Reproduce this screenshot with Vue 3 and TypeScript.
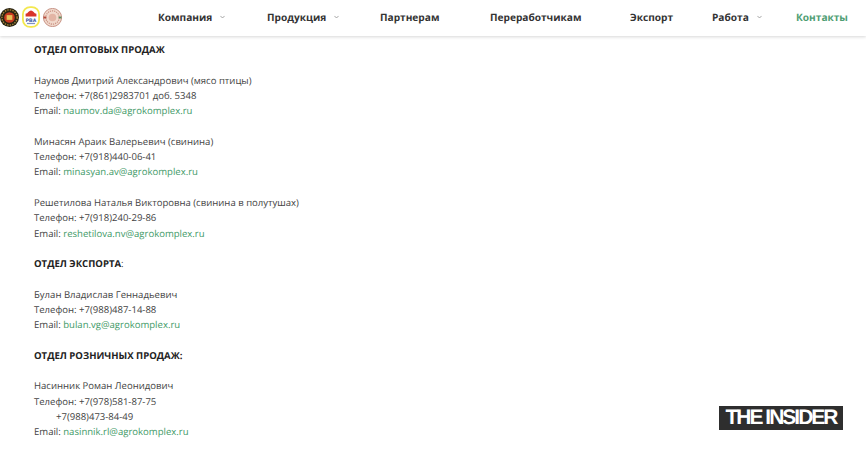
<template>
  <div class="page">
    <header class="topbar">
      <div class="logos">
        <svg class="logo logo-one" viewBox="0 0 20 20">
          <circle cx="10" cy="10" r="10" fill="#2b2412" />
          <circle cx="10" cy="10" r="8" fill="none" stroke="#a98a3a" stroke-width="1.4" stroke-dasharray="1.5 1.2" />
          <circle cx="10" cy="10" r="5.6" fill="#c8391f" />
          <rect x="7" y="7.5" width="6" height="5" fill="#e8c25a" />
        </svg>
        <svg class="logo logo-two" viewBox="0 0 20 24">
          <rect x="1" y="1" width="18" height="22" rx="8" fill="#fff" stroke="#f3e84f" stroke-width="2" />
          <path d="M4 11.5 L4 8.5 Q6 8.5 7 6.5 Q10 3 13 6.5 Q14 8.5 16 8.5 L16 11.5 Z" fill="#d8352a" />
          <text x="10" y="17.5" class="logo-text">PBA</text>
          <rect x="5.5" y="18.5" width="9" height="1.4" fill="#7d92c4" />
        </svg>
        <svg class="logo logo-three" viewBox="0 0 20 20">
          <circle cx="10" cy="10" r="9.6" fill="#f1d9cc" stroke="#b9796a" stroke-width="0.8" />
          <circle cx="10" cy="10" r="7" fill="none" stroke="#c98f80" stroke-width="1.2" stroke-dasharray="1.3 1" />
          <circle cx="10" cy="10" r="4" fill="#e3b5a5" />
          <rect x="0.5" y="9" width="3" height="2" fill="#b54a3a" />
          <rect x="16.5" y="9" width="3" height="2" fill="#5d8a5d" />
        </svg>
      </div>
      <nav class="menu">
        <a v-for="item in menu" :key="item.label" class="menu-item" :class="{ active: item.active }" :style="{ width: item.width + 'px' }">
          {{ item.label }}
          <svg v-if="item.drop" class="chevron" viewBox="0 0 6 4"><path d="M0.5 0.7 L3 3.2 L5.5 0.7" fill="none" stroke="#8a8a8a" stroke-width="0.9" /></svg>
        </a>
      </nav>
    </header>

    <main class="content">
      <template v-for="(section, i) in sections" :key="i">
        <p class="title"><b>{{ section.title }}</b>{{ section.tail }}</p>
        <p v-for="person in section.people" :key="person.email" class="person">
          {{ person.name }}<br />
          Телефон: {{ person.phone }}<br />
          <template v-if="person.phone2"><span class="indent">{{ person.phone2 }}</span><br /></template>
          Email: <a class="mail">{{ person.email }}</a>
        </p>
      </template>
    </main>

    <div class="badge">THE INSIDER</div>
  </div>
</template>

<script setup lang="ts">
interface Person {
  name: string
  phone: string
  phone2?: string
  email: string
}

const menu = [
  { label: 'Компания', drop: true, width: 109 },
  { label: 'Продукция', drop: true, width: 113 },
  { label: 'Партнерам', width: 110 },
  { label: 'Переработчикам', width: 140 },
  { label: 'Экспорт', width: 82 },
  { label: 'Работа', drop: true, width: 84 },
  { label: 'Контакты', active: true, width: 52 }
]

const sections: { title: string; tail?: string; people: Person[] }[] = [
  {
    title: 'ОТДЕЛ ОПТОВЫХ ПРОДАЖ',
    people: [
      { name: 'Наумов Дмитрий Александрович (мясо птицы)', phone: '+7(861)2983701 доб. 5348', email: 'naumov.da@agrokomplex.ru' },
      { name: 'Минасян Араик Валерьевич (свинина)', phone: '+7(918)440-06-41', email: 'minasyan.av@agrokomplex.ru' },
      { name: 'Решетилова Наталья Викторовна (свинина в полутушах)', phone: '+7(918)240-29-86', email: 'reshetilova.nv@agrokomplex.ru' }
    ]
  },
  {
    title: 'ОТДЕЛ ЭКСПОРТА',
    tail: ':',
    people: [
      { name: 'Булан Владислав Геннадьевич', phone: '+7(988)487-14-88', email: 'bulan.vg@agrokomplex.ru' }
    ]
  },
  {
    title: 'ОТДЕЛ РОЗНИЧНЫХ ПРОДАЖ:',
    people: [
      { name: 'Насинник Роман Леонидович', phone: '+7(978)581-87-75', phone2: '+7(988)473-84-49', email: 'nasinnik.rl@agrokomplex.ru' }
    ]
  }
]
</script>

<style scoped>
.page {
  height: 451px;
  overflow: hidden;
  background: #fff;
  font-family: "Open Sans", sans-serif;
  color: #444;
  text-rendering: geometricPrecision;
}
.topbar {
  height: 36px;
  padding-bottom: 2px;
  box-sizing: border-box;
  display: flex;
  align-items: center;
  background: #fff;
  box-shadow: 0 1px 3px rgba(0, 0, 0, 0.16);
}
.logos {
  display: flex;
  align-items: center;
  width: 158px;
  flex: none;
}
.logo-one {
  width: 19px;
  height: 19px;
}
.logo-two {
  width: 18px;
  height: 22px;
  margin-left: 3px;
}
.logo-three {
  width: 19px;
  height: 19px;
  margin-left: 3px;
}
.logo-text {
  font-family: "Liberation Sans", sans-serif;
  font-size: 5.5px;
  font-weight: 700;
  fill: #2a4a9a;
  text-anchor: middle;
}
.menu {
  display: flex;
  align-items: center;
}
.menu-item {
  flex: none;
  display: flex;
  align-items: center;
  font-size: 10.15px;
  font-weight: 700;
  white-space: nowrap;
  color: #333;
}
.menu-item.active {
  color: #4f9e74;
}
.chevron {
  width: 5px;
  height: 4px;
  margin-left: 8px;
}
.content {
  padding: 6.2px 0 0 34px;
  font-size: 9.55px;
  line-height: 15.28px;
}
.content p {
  margin: 0 0 15.28px;
}
.title b {
  font-weight: 700;
  color: #222;
}
.indent {
  padding-left: 22px;
}
.mail {
  color: #3f9a68;
}
.badge {
  position: absolute;
  left: 719px;
  top: 406px;
  width: 124px;
  height: 24px;
  background: #2e2e2e;
  color: #fff;
  font-family: "Liberation Sans", sans-serif;
  font-weight: 700;
  font-size: 21px;
  line-height: 24px;
  letter-spacing: -2px;
  text-align: center;
  white-space: nowrap;
}
</style>
